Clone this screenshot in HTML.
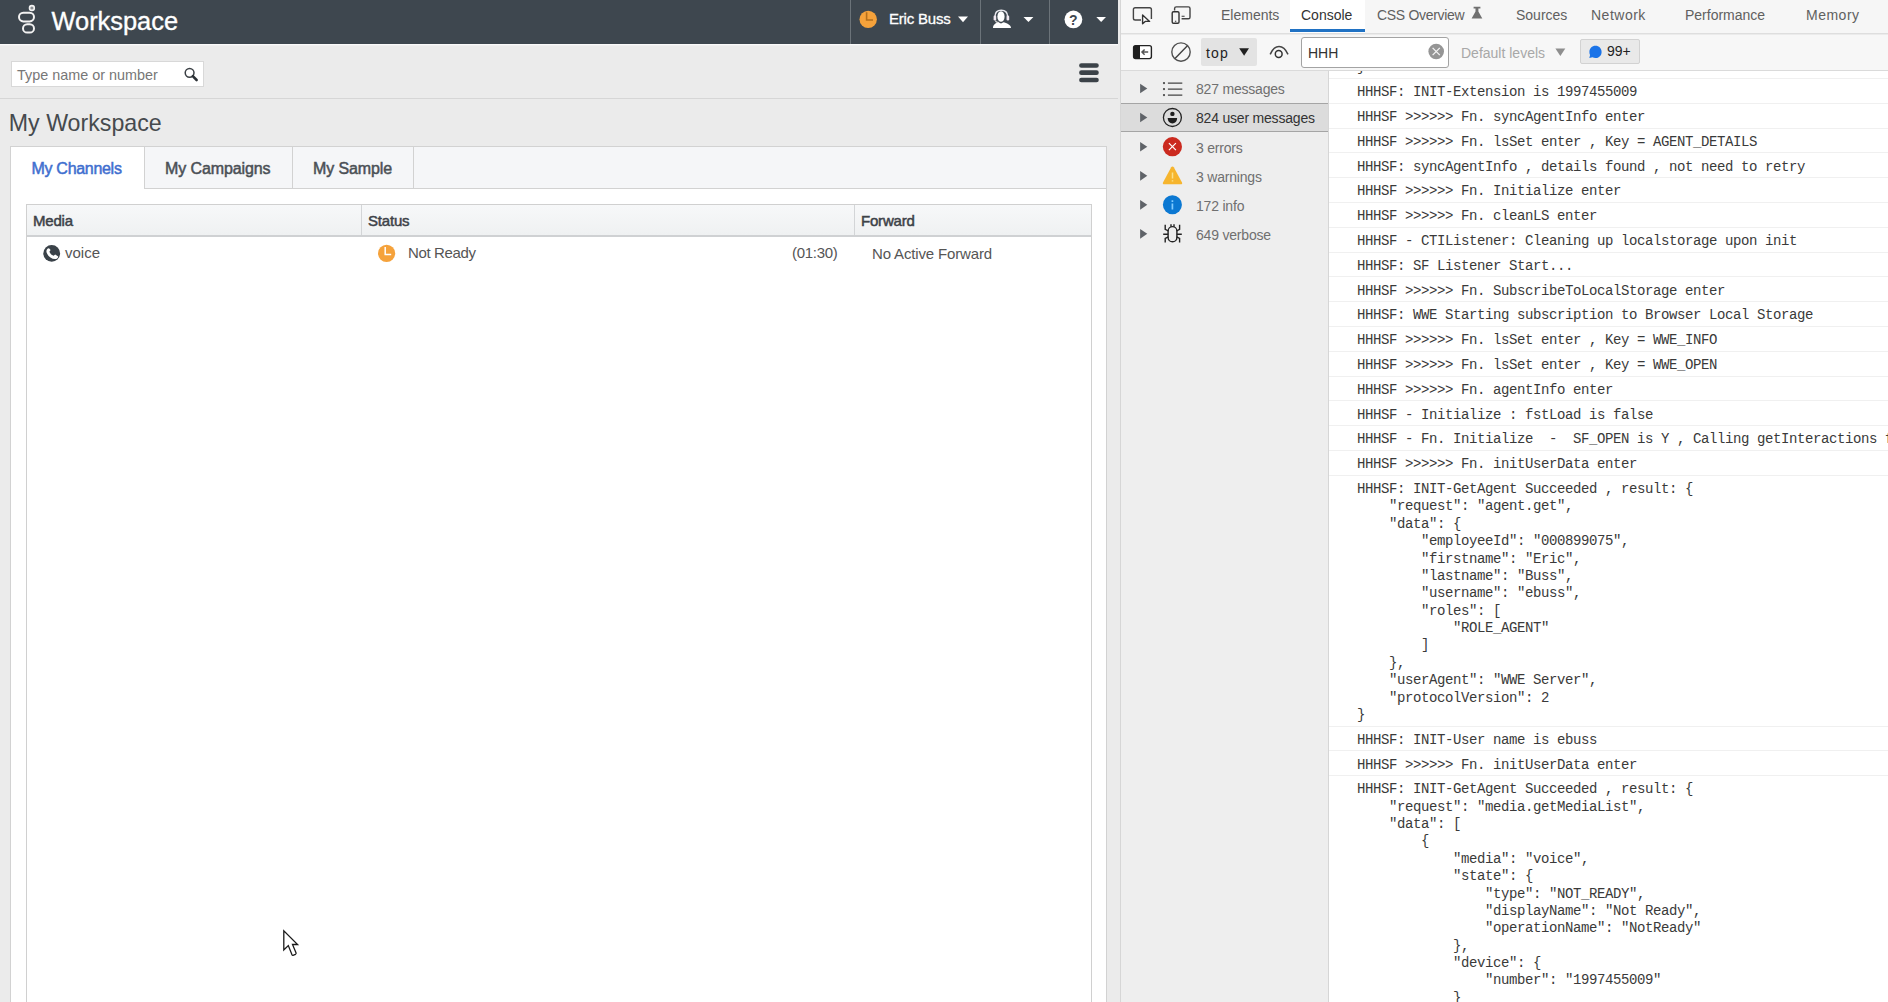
<!DOCTYPE html>
<html><head><meta charset="utf-8">
<style>
*{margin:0;padding:0;box-sizing:border-box}
html,body{width:1888px;height:1002px;overflow:hidden;background:#ebebeb;font-family:"Liberation Sans",sans-serif}
.a{position:absolute}
.t{position:absolute;white-space:pre;line-height:1}
/* left app */
#hdr{left:0;top:0;width:1118px;height:44px;background:#3e474f}
#hdrline{left:0;top:44px;width:1118px;height:1px;background:#fafafa}
.sep{top:0;width:1px;height:44px;background:#6b7379}
#search{left:11px;top:61px;width:193px;height:26px;background:#fff;border:1px solid #d8d8d8}
#menuline{left:0;top:98px;width:1118px;height:1px;background:#d6d6d6}
#panel{left:10px;top:146px;width:1097px;height:870px;background:#fff;border:1px solid #d2d2d2}
#tabbar{left:11px;top:147px;width:1095px;height:42px;background:#f5f6f8;border-bottom:1px solid #d2d2d2}
#acttab{left:11px;top:147px;width:133px;height:42px;background:#fff}
.tsep{top:147px;width:1px;height:42px;background:#d2d2d2}
#tbl{left:26px;top:204px;width:1066px;height:820px;border:1px solid #d0d0d0;background:#fff}
#thead{left:27px;top:205px;width:1064px;height:32px;background:linear-gradient(#f7f8f9,#eff1f2);border-bottom:2px solid #cfd1d3}
.csep{top:205px;width:1px;height:30px;background:#d3d5d7}
/* devtools */
#dt{left:1120px;top:0;width:768px;height:1002px;background:#fff;border-left:1px solid #d6d6d6}
#dtabs{left:1121px;top:0;width:767px;height:34px;background:#f6f6f6;border-bottom:1px solid #dedede}
#dtool{left:1121px;top:34px;width:767px;height:37px;background:#f7f7f7;border-bottom:1px solid #dadada}
#side{left:1121px;top:71px;width:208px;height:931px;background:#eeeeee;border-right:1px solid #d6d6d6}
.dtab{font-size:14px;color:#606060}
.side{font-size:14px;color:#707070;letter-spacing:-0.2px}
.mono{font-family:"Liberation Mono",monospace;font-size:14px;letter-spacing:-0.4px;color:#222}
.rowsep{left:1329px;width:559px;height:1px;background:#efefef}

#cons{left:1329px;top:71px;width:559px;height:931px;overflow:hidden;background:#fff}
.sepl{position:absolute;left:0;width:559px;height:1px;background:#f0f0f0}
.mt{position:absolute;left:28px;white-space:pre;font-family:"Liberation Mono",monospace;font-size:14px;letter-spacing:-0.4px;line-height:17.38px;color:#3a3a3a}
</style></head><body>
<!-- ================= LEFT APP ================= -->
<div class="a" id="hdr"></div>
<div class="a" id="hdrline"></div><div class="a" style="left:0;top:45px;width:1118px;height:1px;background:#f0f0f0"></div>
<div class="a sep" style="left:850px"></div>
<div class="a sep" style="left:980px"></div>
<div class="a sep" style="left:1049px"></div>
<div class="t" style="left:51.5px;top:9px;font-size:25.4px;color:#fff;-webkit-text-stroke:0.35px #fff">Workspace</div>
<div class="t" style="left:889px;top:11px;font-size:15px;letter-spacing:-0.2px;-webkit-text-stroke:0.3px #fff;color:#fff">Eric Buss</div>

<div class="a" id="search"></div>
<div class="t" style="left:17px;top:67.5px;font-size:14.4px;color:#777">Type name or number</div>
<div class="a" id="menuline"></div>
<div class="t" style="left:8.8px;top:111.5px;font-size:23.2px;color:#464a4e">My Workspace</div>

<div class="a" id="panel"></div>
<div class="a" id="tabbar"></div>
<div class="a" id="acttab"></div>
<div class="a tsep" style="left:144px"></div>
<div class="a tsep" style="left:292px"></div>
<div class="a tsep" style="left:413px"></div>
<div class="t" style="left:31.5px;top:161px;font-size:16px;letter-spacing:-0.3px;-webkit-text-stroke:0.5px #3f6fcf;color:#3f6fcf">My Channels</div>
<div class="t" style="left:165px;top:161px;font-size:16px;letter-spacing:-0.1px;-webkit-text-stroke:0.5px #4b5056;color:#4b5056">My Campaigns</div>
<div class="t" style="left:313px;top:161px;font-size:16px;letter-spacing:-0.1px;-webkit-text-stroke:0.5px #4b5056;color:#4b5056">My Sample</div>

<div class="a" id="tbl"></div>
<div class="a" id="thead"></div>
<div class="a csep" style="left:361px"></div>
<div class="a csep" style="left:854px"></div>
<div class="t" style="left:33px;top:213px;font-size:15px;letter-spacing:-0.2px;-webkit-text-stroke:0.5px #3d4248;color:#3d4248">Media</div>
<div class="t" style="left:368px;top:213px;font-size:15px;letter-spacing:-0.2px;-webkit-text-stroke:0.5px #3d4248;color:#3d4248">Status</div>
<div class="t" style="left:861px;top:213px;font-size:15px;letter-spacing:-0.2px;-webkit-text-stroke:0.5px #3d4248;color:#3d4248">Forward</div>
<div class="t" style="left:65px;top:245px;font-size:15px;color:#555">voice</div>
<div class="t" style="left:408px;top:245px;font-size:15px;letter-spacing:-0.35px;color:#555">Not Ready</div>
<div class="t" style="left:792px;top:245px;font-size:15px;letter-spacing:-0.3px;color:#555">(01:30)</div>
<div class="t" style="left:872px;top:246px;font-size:15px;letter-spacing:-0.15px;color:#555">No Active Forward</div>


<svg class="a" style="left:0;top:0" width="1120" height="300" viewBox="0 0 1120 300">
 <!-- logo -->
 <g fill="none" stroke="#f2f2f2" stroke-width="2">
  <rect x="19" y="12.8" width="15" height="8.6" rx="4.3"/>
  <rect x="23" y="24.2" width="11" height="8.4" rx="4.2"/>
  <circle cx="31.9" cy="8" r="2.4" stroke-width="1.6" fill="#8a8f93"/>
 </g>
 <!-- header clock -->
 <circle cx="868.2" cy="19.35" r="8.7" fill="#f5a23b"/>
 <path d="M866.6 12.2V20H873" fill="none" stroke="#b36f1c" stroke-width="1.6"/>
 <!-- carets -->
 <path d="M958 16.6H968L963 22.3Z" fill="#fff"/>
 <path d="M1023.5 17H1033.4L1028.45 22Z" fill="#fff"/>
 <path d="M1096.3 16.9H1106L1101.15 22.1Z" fill="#fff"/>
 <!-- agent -->
 <ellipse cx="1001" cy="16.5" rx="3.6" ry="5.3" fill="#fff"/>
 <path d="M993 28C993 24.5 995.5 23 998.5 22.2L1001 23.5L1003.5 22.2C1006.5 23 1011 24.5 1011 28Z" fill="#fff"/>
 <path d="M995 19.5V16.5C995 12.5 997.5 10.2 1001.2 10.2C1005 10.2 1007.6 12.5 1007.6 16.5V19" fill="none" stroke="#e8e8ee" stroke-width="1.4"/>
 <rect x="993.6" y="15.5" width="2.6" height="5" rx="1.2" fill="#f0e8f0"/>
 <rect x="1006.6" y="15.5" width="2.6" height="5" rx="1.2" fill="#f0e8f0"/>
 <path d="M995.5 20.5C995.5 22 997 22.5 999 22.5" fill="none" stroke="#ddd" stroke-width="1.1"/>
 <!-- help -->
 <circle cx="1073.4" cy="19.45" r="8.9" fill="#fff"/>
 <text x="1073.4" y="24.6" text-anchor="middle" font-family="Liberation Sans" font-weight="bold" font-size="14" fill="#3e474f">?</text>
 <!-- search lens -->
 <circle cx="189.6" cy="72.8" r="4.4" fill="none" stroke="#3a3f44" stroke-width="1.5"/>
 <path d="M192.8 76.2L196.6 80" stroke="#2c3136" stroke-width="2.6" stroke-linecap="round"/>
 <!-- hamburger -->
 <g stroke="#3b4248" stroke-width="4.6" stroke-linecap="round">
  <path d="M1081.4 65.5H1096.5M1081.4 72.65H1096.5M1081.4 80H1096.5"/>
 </g>
 <!-- phone -->
 <circle cx="51.7" cy="253.4" r="8.4" fill="#3a4249"/>
 <path d="M47.9 248.4C46.7 249.2 46.1 250.8 46.6 252.6C47.9 256.4 51.2 258.9 55 259.1C56.5 259.2 57.6 258.5 58.1 257.3L58.2 256.4L55.2 254.5L53.6 255.8C51.7 255.2 50.1 253.7 49.4 251.8L50.6 250.1L49 248.2Z" fill="#fff"/>
 <!-- row clock -->
 <circle cx="386.6" cy="253.3" r="8.6" fill="#f5a23b"/>
 <path d="M385.2 247V254.6H391.2" fill="none" stroke="#fff" stroke-width="1.5"/>
</svg>

<svg class="a" style="left:270px;top:920px" width="40" height="45" viewBox="270 920 40 45">
 <path d="M283.8 930.8V950L288.3 945.6L291.9 954.6Q292.4 955.6 293.5 955.2L295.5 954.3Q296.4 953.8 296 952.8L292.5 944.5H297.6Z" fill="#fff" stroke="#1a1a1a" stroke-width="1.3" stroke-linejoin="miter"/>
</svg>
<!-- ================= DEVTOOLS ================= -->
<div class="a" id="dt"></div>
<div class="a" id="dtabs"></div>
<div class="a" id="dtool"></div>
<div class="a" id="side"></div><div class="a" style="left:1121px;top:34px;width:767px;height:1px;background:#ebebeb"></div>

<div class="t dtab" style="left:1221px;top:8px">Elements</div>
<div class="a" style="left:1290px;top:0;width:75px;height:33px;background:#fff"></div>
<div class="a" style="left:1290px;top:29px;width:75px;height:3px;background:#2072c4"></div>
<div class="t dtab" style="left:1301px;top:8px;color:#333">Console</div>
<div class="t dtab" style="left:1377px;top:8px;letter-spacing:-0.3px">CSS Overview</div>
<div class="t dtab" style="left:1516px;top:8px">Sources</div>
<div class="t dtab" style="left:1591px;top:8px;letter-spacing:0.5px">Network</div>
<div class="t dtab" style="left:1685px;top:8px">Performance</div>
<div class="t dtab" style="left:1806px;top:8px;letter-spacing:0.5px">Memory</div>
<div class="a" style="left:1201px;top:38px;width:56px;height:28px;background:#e3e3e3;border-radius:2px"></div>
<div class="t dtab" style="left:1206px;top:46px;letter-spacing:1.2px;color:#222">top</div>
<div class="a" style="left:1301px;top:37px;width:148px;height:31px;background:#fff;border:1px solid #a3a3a3;border-radius:3px"></div>
<div class="t dtab" style="left:1308px;top:46px;color:#333">HHH</div>
<div class="t dtab" style="left:1461px;top:46px;color:#a8a8a8">Default levels</div>
<div class="a" style="left:1580px;top:39px;width:60px;height:25px;background:#e9e9e9;border:1px solid #d2d2d2;border-radius:2px"></div>
<div class="t dtab" style="left:1607px;top:44px;color:#222">99+</div>
<div class="a" style="left:1121px;top:103px;width:207px;height:29px;background:#dcdcdc;border-top:1px solid #a5a5a5;border-bottom:1px solid #a5a5a5"></div>
<div class="t side" style="left:1196px;top:82px">827 messages</div>
<div class="t side" style="left:1196px;top:111px;color:#333">824 user messages</div>
<div class="t side" style="left:1196px;top:140.5px">3 errors</div>
<div class="t side" style="left:1196px;top:169.8px">3 warnings</div>
<div class="t side" style="left:1196px;top:199.1px">172 info</div>
<div class="t side" style="left:1196px;top:228.4px">649 verbose</div>
<div class="a" id="cons">
<div class="mt" style="top:-11.59px">}</div>
<div class="sepl" style="top:7.00px"></div>
<div class="mt" style="top:13.21px">HHHSF: INIT-Extension is 1997455009</div>
<div class="sepl" style="top:31.80px"></div>
<div class="mt" style="top:38.01px">HHHSF &gt;&gt;&gt;&gt;&gt;&gt; Fn. syncAgentInfo enter</div>
<div class="sepl" style="top:56.60px"></div>
<div class="mt" style="top:62.81px">HHHSF &gt;&gt;&gt;&gt;&gt;&gt; Fn. lsSet enter , Key = AGENT_DETAILS</div>
<div class="sepl" style="top:81.40px"></div>
<div class="mt" style="top:87.61px">HHHSF: syncAgentInfo , details found , not need to retry</div>
<div class="sepl" style="top:106.20px"></div>
<div class="mt" style="top:112.41px">HHHSF &gt;&gt;&gt;&gt;&gt;&gt; Fn. Initialize enter</div>
<div class="sepl" style="top:131.00px"></div>
<div class="mt" style="top:137.21px">HHHSF &gt;&gt;&gt;&gt;&gt;&gt; Fn. cleanLS enter</div>
<div class="sepl" style="top:155.80px"></div>
<div class="mt" style="top:162.01px">HHHSF - CTIListener: Cleaning up localstorage upon init</div>
<div class="sepl" style="top:180.60px"></div>
<div class="mt" style="top:186.81px">HHHSF: SF Listener Start...</div>
<div class="sepl" style="top:205.40px"></div>
<div class="mt" style="top:211.61px">HHHSF &gt;&gt;&gt;&gt;&gt;&gt; Fn. SubscribeToLocalStorage enter</div>
<div class="sepl" style="top:230.20px"></div>
<div class="mt" style="top:236.41px">HHHSF: WWE Starting subscription to Browser Local Storage</div>
<div class="sepl" style="top:255.00px"></div>
<div class="mt" style="top:261.21px">HHHSF &gt;&gt;&gt;&gt;&gt;&gt; Fn. lsSet enter , Key = WWE_INFO</div>
<div class="sepl" style="top:279.80px"></div>
<div class="mt" style="top:286.01px">HHHSF &gt;&gt;&gt;&gt;&gt;&gt; Fn. lsSet enter , Key = WWE_OPEN</div>
<div class="sepl" style="top:304.60px"></div>
<div class="mt" style="top:310.81px">HHHSF &gt;&gt;&gt;&gt;&gt;&gt; Fn. agentInfo enter</div>
<div class="sepl" style="top:329.40px"></div>
<div class="mt" style="top:335.61px">HHHSF - Initialize : fstLoad is false</div>
<div class="sepl" style="top:354.20px"></div>
<div class="mt" style="top:360.41px">HHHSF - Fn. Initialize  -  SF_OPEN is Y , Calling getInteractions for</div>
<div class="sepl" style="top:379.00px"></div>
<div class="mt" style="top:385.21px">HHHSF &gt;&gt;&gt;&gt;&gt;&gt; Fn. initUserData enter</div>
<div class="sepl" style="top:403.80px"></div>
<div class="mt" style="top:410.01px">HHHSF: INIT-GetAgent Succeeded , result: {
    "request": "agent.get",
    "data": {
        "employeeId": "000899075",
        "firstname": "Eric",
        "lastname": "Buss",
        "username": "ebuss",
        "roles": [
            "ROLE_AGENT"
        ]
    },
    "userAgent": "WWE Server",
    "protocolVersion": 2
}</div>
<div class="sepl" style="top:654.54px"></div>
<div class="mt" style="top:660.75px">HHHSF: INIT-User name is ebuss</div>
<div class="sepl" style="top:679.34px"></div>
<div class="mt" style="top:685.55px">HHHSF &gt;&gt;&gt;&gt;&gt;&gt; Fn. initUserData enter</div>
<div class="sepl" style="top:704.14px"></div>
<div class="mt" style="top:710.35px">HHHSF: INIT-GetAgent Succeeded , result: {
    "request": "media.getMediaList",
    "data": [
        {
            "media": "voice",
            "state": {
                "type": "NOT_READY",
                "displayName": "Not Ready",
                "operationName": "NotReady"
            },
            "device": {
                "number": "1997455009"
            }
        },
        {</div>
</div>

<svg class="a" style="left:1120px;top:0" width="768" height="260" viewBox="1120 0 768 260">
 <!-- inspect -->
 <path d="M1141 20H1135.2C1134 20 1133.4 19.4 1133.4 18.2V9.6C1133.4 8.4 1134 7.8 1135.2 7.8H1149.6C1150.8 7.8 1151.4 8.4 1151.4 9.6V19" fill="none" stroke="#444" stroke-width="1.4"/>
 <path d="M1142.6 15V23.8L1145.2 21.4H1149.6Z" fill="#fff" stroke="#333" stroke-width="1.4" stroke-linejoin="round"/>
 <!-- device -->
 <path d="M1174.6 10.5V8.4C1174.6 7.3 1175.2 6.9 1176.3 6.9H1188.4C1189.5 6.9 1190 7.4 1190 8.5V17.2C1190 18.3 1189.5 18.8 1188.4 18.8H1181.6" fill="none" stroke="#444" stroke-width="1.4"/>
 <rect x="1172.2" y="11.8" width="6.8" height="11.4" rx="1.3" fill="none" stroke="#333" stroke-width="1.4"/>
 <path d="M1181.6 16.2H1184.6M1174.9 21.3H1176.3" stroke="#333" stroke-width="1.1"/>
 <!-- flask -->
 <path d="M1473.6 6.8H1480.4V8.4H1478.4V11.4L1482.3 18.4H1471.6L1475.5 11.4V8.4H1473.6Z" fill="#707070"/>
 <!-- sidebar toggle -->
 <rect x="1133.6" y="45.6" width="17.8" height="13" rx="2" fill="#fff" stroke="#222" stroke-width="1.4"/>
 <path d="M1133.6 47.6C1133.6 46.3 1134.3 45.6 1135.6 45.6H1140V58.6H1135.6C1134.3 58.6 1133.6 57.9 1133.6 56.6Z" fill="#1e1e1e"/>
 <path d="M1142 52.1H1148.2M1144.6 49.5L1142 52.1L1144.6 54.7" fill="none" stroke="#555" stroke-width="1.5"/>
 <!-- clear -->
 <circle cx="1181" cy="52.1" r="9.2" fill="none" stroke="#505050" stroke-width="1.4"/>
 <path d="M1175 58.4L1187.4 45.8" stroke="#404040" stroke-width="1.4"/>
 <!-- top caret -->
 <path d="M1239.2 48.2H1249L1244.1 55.7Z" fill="#202020"/>
 <!-- eye -->
 <path d="M1270.2 54.4C1272.5 49.2 1275.5 46.6 1279 46.6C1282.5 46.6 1285.6 49.2 1288 54.4" fill="none" stroke="#444" stroke-width="1.5"/>
 <ellipse cx="1278.7" cy="54" rx="3.4" ry="3.5" fill="none" stroke="#333" stroke-width="1.5"/>
 <!-- filter clear -->
 <circle cx="1436.2" cy="51.5" r="7.8" fill="#959595"/>
 <path d="M1432.6 47.9L1439.8 55.1M1439.8 47.9L1432.6 55.1" stroke="#f4f4f4" stroke-width="1.3"/>
 <!-- levels caret -->
 <path d="M1555.4 48.5H1565.3L1560.35 56Z" fill="#8e8e8e"/>
 <!-- bubble -->
 <path d="M1595.5 45.8C1599 45.8 1601.6 48.4 1601.6 51.9C1601.6 55.4 1599 58 1595.5 58C1594.4 58 1593.4 57.7 1592.5 57.3L1589.3 58L1590.1 55.1C1589.6 54.2 1589.4 53.1 1589.4 51.9C1589.4 48.4 1592 45.8 1595.5 45.8Z" fill="#1a73e8"/>
 <!-- sidebar triangles -->
 <g fill="#5f6368">
  <path d="M1140.1 83.7V93.3L1147.3 88.5Z"/>
  <path d="M1140.1 112.7V122.3L1147.3 117.5Z"/>
  <path d="M1140.1 141.9V151.5L1147.3 146.7Z"/>
  <path d="M1140.1 170.9V180.8L1147.3 175.85Z"/>
  <path d="M1140.1 199.9V209.8L1147.3 204.85Z"/>
  <path d="M1140.1 228.9V238.8L1147.3 233.85Z"/>
 </g>
 <!-- list icon -->
 <g fill="#444"><circle cx="1164" cy="83.1" r="1.1"/><circle cx="1164" cy="89.1" r="1.1"/><circle cx="1164" cy="95.1" r="1.1"/></g>
 <path d="M1167.9 83.1H1182.3M1167.9 89.1H1182.3M1167.9 95.1H1182.3" stroke="#444" stroke-width="1.4"/>
 <!-- user icon -->
 <circle cx="1172.4" cy="117.5" r="9" fill="none" stroke="#222" stroke-width="1.3"/>
 <circle cx="1172.4" cy="113.9" r="2.2" fill="#1e1e1e"/>
 <path d="M1167.7 118.1H1177.1C1177.1 121.5 1175 123.5 1172.4 123.5C1169.8 123.5 1167.7 121.5 1167.7 118.1Z" fill="#1e1e1e"/>
 <!-- error -->
 <circle cx="1172.4" cy="146.7" r="9.6" fill="#cb2a1f"/>
 <path d="M1168.9 143.2L1175.9 150.2M1175.9 143.2L1168.9 150.2" stroke="#fff" stroke-width="1.2"/>
 <!-- warning -->
 <path d="M1172.5 166.4C1173.1 166.4 1173.5 166.7 1173.8 167.2L1182 182.4C1182.5 183.4 1182 184.3 1180.9 184.3H1164.1C1163 184.3 1162.5 183.4 1163 182.4L1171.2 167.2C1171.5 166.7 1171.9 166.4 1172.5 166.4Z" fill="#f6b52e"/>
 <path d="M1172.5 172.6V178.4M1172.5 180.2V181.6" stroke="#fbe28a" stroke-width="1.5"/>
 <!-- info -->
 <circle cx="1172.4" cy="204.7" r="9.5" fill="#0b78d2"/>
 <path d="M1172.4 200.3V202.1M1172.4 203.5V209.6" stroke="#7fcbff" stroke-width="1.7"/>
 <!-- bug -->
 <g fill="none" stroke="#222" stroke-width="1.4">
  <rect x="1168.1" y="226.6" width="8.8" height="15.2" rx="4.4"/>
  <path d="M1165.2 224.8V229.3L1168.4 231M1179.6 224.8V229.3L1176.6 231M1163.2 234.2H1168.2M1176.8 234.2H1181.8M1165.2 242.4V238.4L1168.4 236.8M1179.6 242.4V238.4L1176.6 236.8M1171 224.2V226.6M1174 224.2V226.6"/>
 </g>
</svg>
</body></html>
